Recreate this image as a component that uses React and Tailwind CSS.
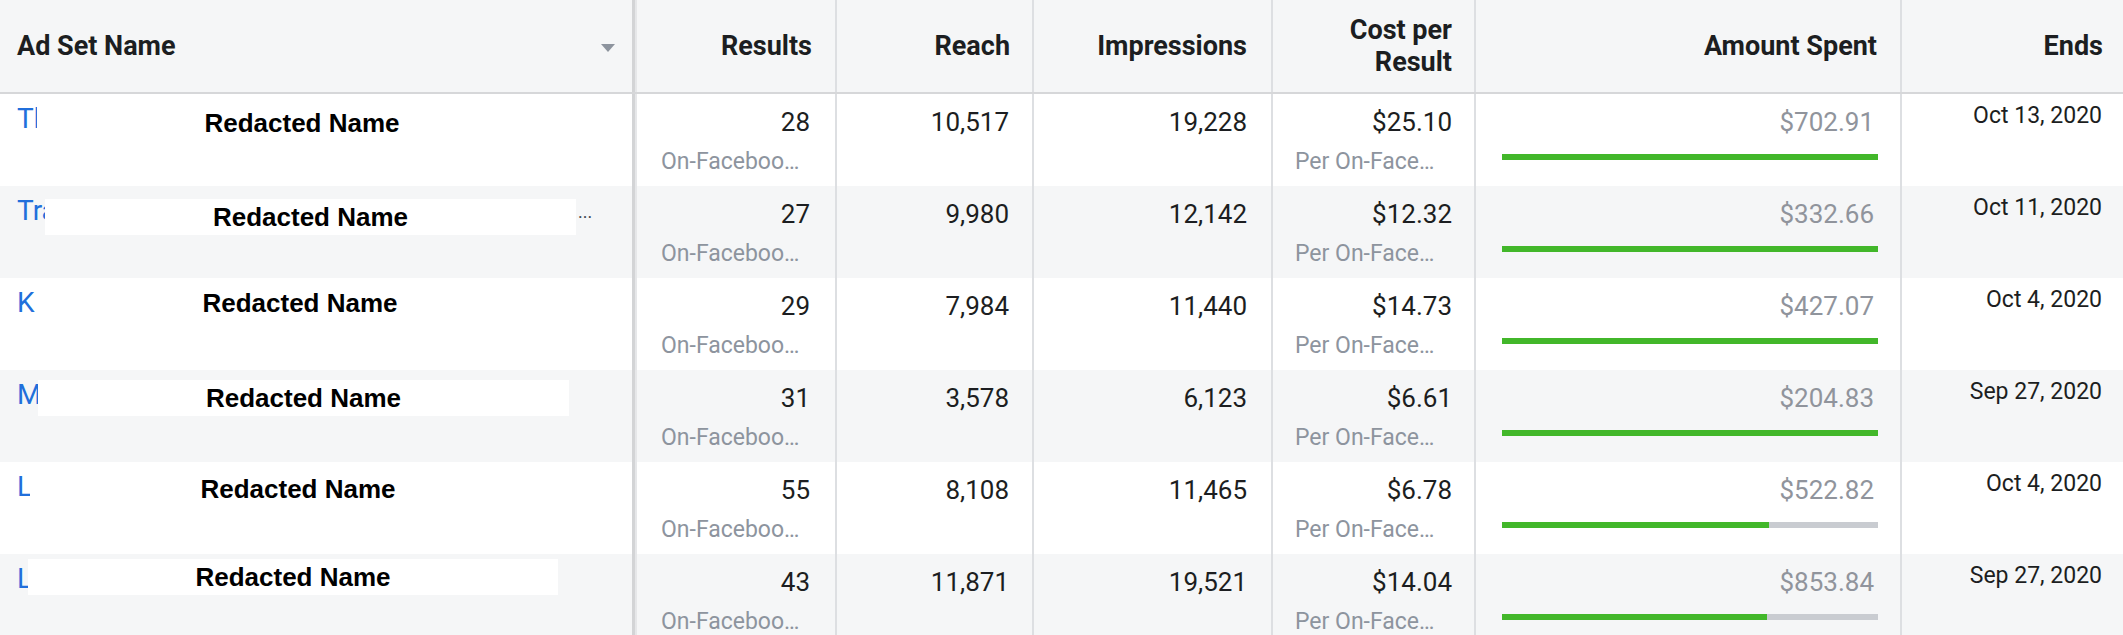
import React from "react";

const rows = [
  { link: "Th", results: "28", reach: "10,517", imp: "19,228", cost: "$25.10", spent: "$702.91", pct: 100, ends: "Oct 13, 2020", box: [37, 11, 530] },
  { link: "Tra", results: "27", reach: "9,980", imp: "12,142", cost: "$12.32", spent: "$332.66", pct: 100, ends: "Oct 11, 2020", box: [45, 13, 531], dots: true },
  { link: "Ko", results: "29", reach: "7,984", imp: "11,440", cost: "$14.73", spent: "$427.07", pct: 100, ends: "Oct 4, 2020", box: [35, 7, 530] },
  { link: "Ma", results: "31", reach: "3,578", imp: "6,123", cost: "$6.61", spent: "$204.83", pct: 100, ends: "Sep 27, 2020", box: [38, 10, 531] },
  { link: "Lo", results: "55", reach: "8,108", imp: "11,465", cost: "$6.78", spent: "$522.82", pct: 71, ends: "Oct 4, 2020", box: [30, 9, 536] },
  { link: "Le", results: "43", reach: "11,871", imp: "19,521", cost: "$14.04", spent: "$853.84", pct: 70.5, ends: "Sep 27, 2020", box: [28, 5, 530] },
];

function HeaderCell({ className, children }) {
  return (
    <div className={`flex items-center justify-end text-right h-full border-r-2 border-[#dddfe2] ${className}`}>
      {children}
    </div>
  );
}

function NumCell({ className, value, sub, subClass = "" }) {
  return (
    <div className={`h-full border-r-2 border-[#dddfe2] pt-[12px] text-right ${className}`}>
      <div className="text-[26px] leading-[32px] text-[#1c1e21]">{value}</div>
      {sub && <div className={`mt-[9px] text-[23px] leading-[30px] text-[#8d949e] truncate ${subClass}`}>{sub}</div>}
    </div>
  );
}

export default function App() {
  return (
    <div className="w-[2123px] h-[635px] overflow-hidden bg-white font-[Roboto,sans-serif]">
      <div className="flex h-[94px] bg-[#f5f6f7] border-b-2 border-[#d6d7d9] text-[27px] leading-[32px] font-bold text-[#1c1e21]">
        <div className="relative flex items-center w-[635px] h-full border-r-[3px] border-[#d3d4d6] pl-[17px]">
          Ad Set Name
          <svg className="absolute left-[601px] top-[44px]" width="14" height="8" viewBox="0 0 14 8">
            <path d="M0 0h14L7 8z" fill="#8d949e" />
          </svg>
        </div>
        <HeaderCell className="w-[202px] border-l-2 border-l-[#e6e7e9] pr-[23px]">Results</HeaderCell>
        <HeaderCell className="w-[197px] pr-[22px]">Reach</HeaderCell>
        <HeaderCell className="w-[239px] pr-[24px]">Impressions</HeaderCell>
        <HeaderCell className="w-[203px] pr-[22px]">
          <span>Cost per<br />Result</span>
        </HeaderCell>
        <HeaderCell className="w-[426px] pr-[23px]">Amount Spent</HeaderCell>
        <div className="flex flex-1 items-center justify-end h-full pr-[20px]">Ends</div>
      </div>

      {rows.map((r, i) => (
        <div key={i} className={`flex h-[92px] ${i % 2 === 1 ? "bg-[#f5f6f7]" : "bg-white"}`}>
          <div className="relative w-[635px] h-full border-r-[3px] border-[#d3d4d6] pl-[17px] pt-[8px]">
            <div className="overflow-hidden whitespace-nowrap text-[28px] leading-[34px] text-[#216fdb]" style={{ width: r.box[0] - 17 }}>
              {r.link}
            </div>
            <div
              className="absolute h-[36px] bg-white flex items-center justify-center font-['Liberation_Sans',Arial,sans-serif] font-bold text-[26px] text-black"
              style={{ left: r.box[0], top: r.box[1], width: r.box[2] }}
            >
              Redacted Name
            </div>
            {r.dots && (
              <span className="absolute left-[578px] top-[14px] text-[18px] leading-[24px] text-[#444950]">...</span>
            )}
          </div>
          <NumCell className="w-[202px] border-l-2 border-l-[#e6e7e9] pl-[24px] pr-[25px]" value={r.results} sub="On-Facebook Leads" />
          <NumCell className="w-[197px] pr-[23px]" value={r.reach} />
          <NumCell className="w-[239px] pr-[24px]" value={r.imp} />
          <NumCell className="w-[203px] pl-[22px] pr-[22px]" value={r.cost} sub="Per On-Facebook Lead" subClass="pr-[8px]" />
          <div className="w-[426px] h-full border-r-2 border-[#dddfe2] pt-[12px] pl-[26px] pr-[22px]">
            <div className="text-right pr-[4px] text-[26px] leading-[32px] text-[#90949c]">{r.spent}</div>
            <div className="mt-[16px] h-[6px] bg-[#c9ccd1] flex">
              <div className="h-full bg-[#42b72a]" style={{ width: `${r.pct}%` }} />
            </div>
          </div>
          <div className="flex-1 h-full pt-[8px] pr-[21px] text-right text-[23px] leading-[28px] text-[#1c1e21]">{r.ends}</div>
        </div>
      ))}
    </div>
  );
}
